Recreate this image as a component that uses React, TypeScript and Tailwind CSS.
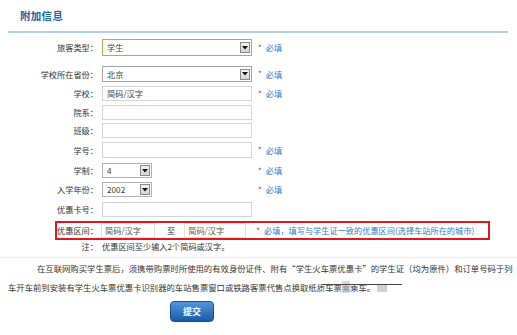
import React from "react";

const font = { fontFamily: '"Noto Sans CJK SC", "Noto Sans", sans-serif' };

function Req() {
  return (
    <>
      <span className="ml-[6px] text-[8px] leading-none text-[#e0202a]">*</span>
      <span className="ml-[4px] text-[8.2px] text-[#2f7cc9]">必填</span>
    </>
  );
}

function Arrow() {
  return (
    <div className="w-[10px] h-[11px] border border-[#8a8a8a] bg-gradient-to-b from-[#f4f4f4] to-[#d4d4d4] flex items-center justify-center">
      <svg width="6" height="4" viewBox="0 0 6 4">
        <polygon points="0,0 6,0 3,3.5" fill="#111" />
      </svg>
    </div>
  );
}

function Label({ children }: { children: React.ReactNode }) {
  return <div className="w-[98px] text-right text-[8.2px] text-[#333] whitespace-nowrap">{children}</div>;
}

function Select({ value, w, border, h }: { value: string; w: string; border: string; h: string }) {
  return (
    <div className={`ml-[4px] ${w} ${h} border ${border} bg-white flex items-center justify-between pl-[4px] pr-[1px]`}>
      <span className="text-[8.2px] text-[#444]">{value}</span>
      <Arrow />
    </div>
  );
}

function Input({ value, h }: { value?: string; h: string }) {
  return (
    <div className={`ml-[4px] w-[150px] ${h} border border-[#d4d4d4] bg-white flex items-center pl-[4px]`}>
      <span className="text-[8.2px] text-[#444]">{value}</span>
    </div>
  );
}

export default function App() {
  return (
    <div className="w-[517px] h-[335px] bg-white overflow-hidden" style={font}>
      <div className="h-[31px] flex items-center pl-[20px]">
        <span className="text-[10.5px] font-bold text-[#1f5fa6] tracking-[0.3px]">附加信息</span>
      </div>
      <div className="mx-[8px] w-[500px] h-[2px] bg-[#b3cfeb]" />

      <div className="flex items-center h-[17px] mt-[6px]">
        <Label>旅客类型：</Label>
        <Select value="学生" w="w-[150px]" h="h-[17px]" border="border-[#c9a24e]" />
        <Req />
      </div>
      <div className="flex items-center h-[16px] mt-[10px]">
        <Label>学校所在省份：</Label>
        <Select value="北京" w="w-[150px]" h="h-[16px]" border="border-[#a5a5a5]" />
        <Req />
      </div>
      <div className="flex items-center h-[15px] mt-[4px]">
        <Label>学校：</Label>
        <Input value="简码/汉字" h="h-[15px]" />
        <Req />
      </div>
      <div className="flex items-center h-[15px] mt-[4px]">
        <Label>院系：</Label>
        <Input h="h-[15px]" />
      </div>
      <div className="flex items-center h-[15px] mt-[3px]">
        <Label>班级：</Label>
        <Input h="h-[15px]" />
      </div>
      <div className="flex items-center h-[16px] mt-[4px]">
        <Label>学号：</Label>
        <Input h="h-[16px]" />
        <Req />
      </div>
      <div className="flex items-center h-[15px] mt-[5px]">
        <Label>学制：</Label>
        <Select value="4" w="w-[50px]" h="h-[15px]" border="border-[#b0b0b0]" />
        <span className="ml-[100px]" />
        <Req />
      </div>
      <div className="flex items-center h-[15px] mt-[4px]">
        <Label>入学年份：</Label>
        <Select value="2002" w="w-[50px]" h="h-[15px]" border="border-[#b0b0b0]" />
        <span className="ml-[100px]" />
        <Req />
      </div>
      <div className="flex items-center h-[15px] mt-[5px]">
        <Label>优惠卡号：</Label>
        <Input h="h-[15px]" />
      </div>

      <div className="ml-[55px] mt-[4px] w-[435px] h-[19px] border-2 border-[#e2141c] flex items-center">
        <div className="w-[41px] text-right text-[8.2px] text-[#333] whitespace-nowrap">优惠区间：</div>
        <div className="ml-[3px] w-[54px] h-[15px] border border-[#e2e2e2] flex items-center pl-[3px]">
          <span className="text-[8.2px] text-[#555]">简码/汉字</span>
        </div>
        <span className="ml-[12px] text-[8.2px] text-[#333]">至</span>
        <div className="ml-[9px] w-[62px] h-[15px] border border-[#e2e2e2] flex items-center pl-[3px]">
          <span className="text-[8.2px] text-[#555]">简码/汉字</span>
        </div>
        <span className="ml-[10px] text-[8px] leading-none text-[#e0202a]">*</span>
        <span className="ml-[4px] text-[8.2px] text-[#2f7cc9] whitespace-nowrap">必填，填写与学生证一致的优惠区间(选择车站所在的城市)</span>
      </div>

      <div className="flex items-center h-[12px]">
        <Label>注：</Label>
        <span className="ml-[4px] text-[8.2px] text-[#333]">优惠区间至少输入2个简码或汉字。</span>
      </div>

      <div className="mt-[5px] w-[517px] h-px bg-[#ececec]" />

      <div className="relative mt-[1px] pl-[8px] w-[508px] text-[8.35px] leading-[19px] text-[#333] whitespace-nowrap">
        <div className="pl-[29px]">在互联网购买学生票后，须携带购票时所使用的有效身份证件、附有“学生火车票优惠卡”的学生证（均为原件）和订单号码于列</div>
        <div>
          车开车前到安装有学生火车票优惠卡识别器的车站售票窗口或铁路客票代售点换取纸质车票
          <span className="bg-[#d9d9d9] text-[#888]">乘</span>
          <span>乘车。</span>
          <span className="inline-block ml-[2px] w-[10px] h-[7px] bg-[#d0d0d0] align-middle" />
        </div>
        <div className="absolute left-[322px] top-[25px] w-[80px] h-px bg-[#444]" />
      </div>

      <div className="mt-[4px] ml-[170px] w-[44px] h-[21px] rounded-[4px] border border-[#1c4f8e] bg-gradient-to-b from-[#5297de] to-[#1b5aa4] flex items-center justify-center">
        <span className="text-[9px] font-bold text-white">提交</span>
      </div>
    </div>
  );
}
